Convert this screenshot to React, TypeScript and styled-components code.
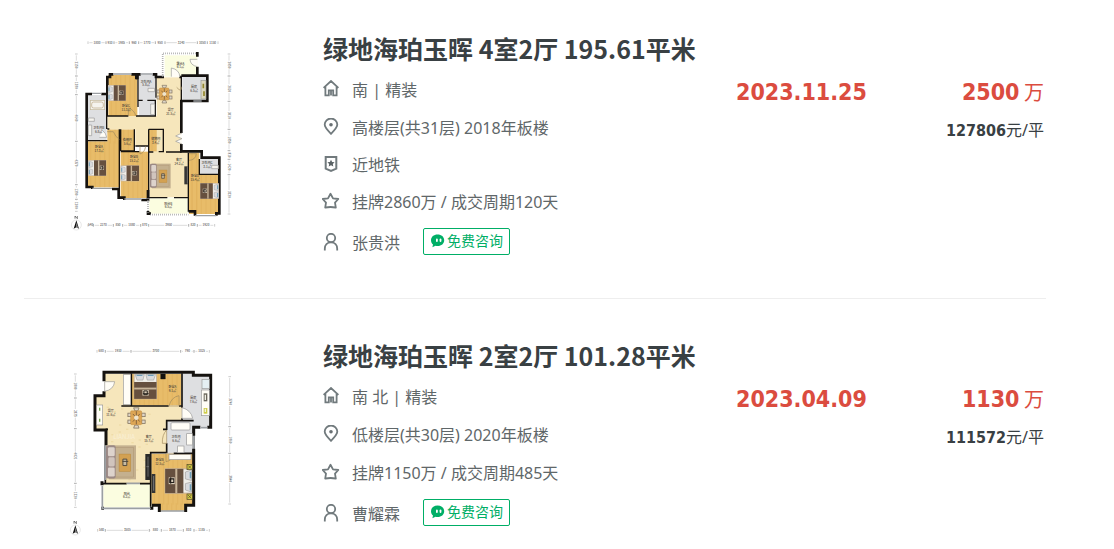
import React from "react";
import styled, { createGlobalStyle } from "styled-components";

const GlobalStyle = createGlobalStyle`
  body {
    margin: 0;
    background: #fff;
    color: #394043;
    font-family: "Noto Sans", "Noto Sans CJK SC", sans-serif;
    font-size: 16px;
  }
`;

const List = styled.main`
  padding: 0 68px 0 24px;
`;

const Card = styled.article`
  display: grid;
  grid-template-columns: 298px minmax(0, 1fr) 310px;
  padding: 29px 0 34px;
  border-bottom: 1px solid #eee;

  &:last-child {
    padding: 37px 0 0;
    border-bottom: 0;
  }
`;

const PlanLink = styled.a`
  display: block;
  padding: 1px 0 0 36px;

  svg {
    display: block;
  }
`;

const Title = styled.h2`
  margin: 0;
  padding-left: 1px;
  font-family: "Noto Sans CJK SC", sans-serif;
  font-size: 25px;
  line-height: 38px;
  font-weight: 700;
  white-space: nowrap;

  a {
    color: inherit;
    text-decoration: none;
  }
`;

const Line = styled.div<{ $height: number }>`
  display: flex;
  align-items: center;
  gap: 12px;
  height: ${(p) => p.$height}px;
  color: #5f6769;
  line-height: 24px;
  white-space: nowrap;

  svg {
    flex: none;
  }
`;

const LineText = styled.span`
  padding-top: 2px;
`;

const Details = styled.div`
  padding-top: 3px;
`;

const ChatButton = styled.button`
  display: flex;
  align-items: center;
  gap: 2px;
  height: 27px;
  margin: 0 0 2px 11px;
  padding: 0 6px;
  border: 1px solid #00ae66;
  border-radius: 2px;
  background: #fff;
  color: #00ae66;
  font-family: inherit;
  font-size: 14px;
  line-height: 24px;
  cursor: pointer;
`;

const Deal = styled.div`
  display: flex;
  justify-content: space-between;
  padding-top: 45px;
  white-space: nowrap;
`;

const Big = styled.div`
  color: #db4c3f;
  font-family: "DejaVu Sans Condensed", "DejaVu Sans", "Noto Sans CJK SC", sans-serif;
  font-size: 23px;
  line-height: 36px;
  font-weight: 700;
`;

const Unit = styled.span`
  font-family: "Noto Sans CJK SC", sans-serif;
  font-size: 20px;
  font-weight: 400;
`;

const Price = styled.div`
  padding-right: 2px;
  text-align: right;
`;

const UnitPrice = styled.div`
  line-height: 40px;

  strong {
    font-family: "DejaVu Sans Condensed", "DejaVu Sans", sans-serif;
  }
`;

const WOOD = "#e8bc69";
const CREAM = "#f6e6bb";
const TILE = "#dedfe1";
const BALCONY = "#fbfde0";
const WALL = "#15120f";

type Box = [number, number, number, number];

const Fill = ({ boxes, color }: { boxes: Box[]; color: string }) => (
  <g fill={color}>
    {boxes.map(([x1, y1, x2, y2], i) => (
      <rect key={i} x={x1} y={y1} width={x2 - x1} height={y2 - y1} />
    ))}
  </g>
);

const Grain = ({ boxes }: { boxes: Box[] }) => (
  <g stroke="#d39e49" strokeWidth="2" opacity=".35">
    {boxes.map(([x1, y1, x2, y2], i) => {
      const xs: number[] = [];
      for (let x = x1 + 9; x < x2; x += 14) xs.push(x);
      return xs.map((x) => <path key={`${i}-${x}`} d={`M${x} ${y1}V${y2}`} />);
    })}
  </g>
);

const Bed = ({ x, y, flip = false, w = 54, h = 48 }: { x: number; y: number; flip?: boolean; w?: number; h?: number }) => (
  <g transform={`translate(${flip ? x + w : x} ${y}) scale(${(flip ? -1 : 1) * (w / 54)} ${h / 48})`}>
    <rect width="54" height="48" fill="#c9b69d" />
    <rect y="2" width="18" height="44" fill="#f0eee9" />
    <path d="M1 3l12 4v13l-12 3zM1 26l12 3v12l-12 4z" fill="#d9dadd" stroke="#8f8d8b" />
    <path d="M3 7v12M3 30v12" stroke="#6f9fb9" strokeWidth="3" />
    <rect x="17" y="1" width="36" height="46" fill="#66503f" />
    <rect x="29" y="1" width="4" height="46" fill="#c8b59a" />
    <rect x="34" y="17" width="12" height="13" fill="#d9cdb9" />
    <path d="M36 20h8v7h-8zM42 17v12" stroke="#211c18" strokeWidth="2" fill="none" />
  </g>
);

const Lounge = ({ x, y, w, h }: { x: number; y: number; w: number; h: number }) => (
  <g transform={`translate(${x} ${y}) scale(${w / 62} ${h / 74})`}>
    <rect x="6" width="56" height="74" fill="#c4b08f" />
    <rect x="12" y="5" width="45" height="64" fill="none" stroke="#ab9270" />
    <rect width="20" height="72" rx="4" fill="#9b8985" />
    <rect x="4" y="4" width="14" height="20" rx="3" fill="#ddd3cc" />
    <rect x="5" y="26" width="13" height="20" rx="3" fill="#d0c4bd" />
    <rect x="4" y="48" width="14" height="20" rx="3" fill="#ddd3cc" />
    <rect x="27" y="19" width="24" height="38" fill="#d3a152" stroke="#b5883f" strokeWidth="1" />
    <path d="M35 30h8v14h-8zM34 35h12" fill="#c9bca2" stroke="#4a443c" strokeWidth="2" />
  </g>
);

const Dining = ({ x, y, s = 1 }: { x: number; y: number; s?: number }) => (
  <g transform={`translate(${x} ${y}) scale(${s})`}>
    <g fill="#ded6c8" stroke="#80725f" strokeWidth="2">
      <rect x="-22" y="-10" width="9" height="9" />
      <rect x="-22" y="8" width="9" height="9" />
      <rect x="14" y="-10" width="9" height="9" />
      <rect x="14" y="8" width="9" height="9" />
      <path d="M-7-24h14l-3 8h-8zM-7 29h14l-3-8h-8z" />
    </g>
    <rect x="-15" y="-16" width="29" height="36" rx="3" fill="#dda655" stroke="#b77d33" />
    <path d="M-9-8l18 20M9-8L-9 12M0-15v34" stroke="#6d5237" strokeWidth="2" />
    <circle cy="2" r="6" fill="#efe4cc" />
  </g>
);

const Label = ({ x, y, name, area }: { x: number; y: number; name: string; area: string }) => (
  <text x={x} y={y} textAnchor="middle" fontSize="9" fontWeight="500" fill="#4a443a">
    <tspan x={x}>{name}</tspan>
    <tspan x={x} dy="11">
      {area}
    </tspan>
  </text>
);

const Ruler = ({ at, stops, values, vertical = false }: { at: number; stops: number[]; values: string[]; vertical?: boolean }) => (
  <g stroke="#b8b8b8" strokeWidth="1.5" fill="none" transform={vertical ? `translate(${at} 0) rotate(90)` : `translate(0 ${at})`}>
    {stops.slice(1).map((end, i) => {
      const start = stops[i];
      const mid = (start + end) / 2;
      const wide = end - start > 34;
      return (
        <g key={i}>
          {wide && <path d={`M${start + 4} 0H${mid - 13}M${mid + 13} 0H${end - 4}`} />}
          <path d={`M${start} -4V4M${end} -4V4`} stroke="#999" />
          <text x={mid} y="3" textAnchor="middle" fontSize="9" fontWeight="500" fill="#555" stroke="none">
            {values[i]}
          </text>
        </g>
      );
    })}
  </g>
);

const Compass = ({ x, y }: { x: number; y: number }) => (
  <g transform={`translate(${x} ${y})`}>
    <circle r="15" fill="none" stroke="#ddd" strokeWidth="2" />
    <path d="M0-14L8 11L0 7L-8 11Z" fill="#111" />
    <path d="M0-8V7L5 9Z" fill="#aaa" />
    <path d="M-4-19v-8l7 8v-8" fill="none" stroke="#444" strokeWidth="2" />
  </g>
);

const wood1: Box[] = [
  [145, 135, 232, 258],
  [83, 334, 178, 472],
  [142, 298, 178, 340],
  [182, 298, 225, 363],
  [182, 365, 265, 504],
  [267, 298, 308, 365],
  [387, 368, 418, 550],
  [387, 434, 475, 552],
];

const PlanLarge = () => (
  <svg width="190" height="205" viewBox="0 0 570 615" fontFamily="Noto Sans CJK SC, sans-serif" role="img" aria-label="4室2厅户型图">
    <Ruler at={38} stops={[84, 138, 162, 208, 236, 286, 315, 412, 442, 474]} values={["1800", "910", "1985", "960", "1770", "950", "3240", "1050", "1150"]} />
    <Ruler at={49} vertical stops={[72, 138, 194, 334, 464, 508, 544]} values={["2150", "1790", "4640", "4370", "1290", "1200"]} />
    <Ruler at={507} vertical stops={[72, 138, 214, 298, 362, 388, 434, 552]} values={["2050", "2620", "3010", "1950", "810", "1420", "3720"]} />
    <Ruler at={586} stops={[84, 100, 160, 188, 242, 266, 386, 412, 464]} values={["540", "2270", "850", "1880", "870", "3950", "820", "1920"]} />
    <Fill color={WOOD} boxes={wood1} />
    <Grain boxes={wood1} />
    <Fill
      color={CREAM}
      boxes={[
        [142, 258, 365, 298],
        [290, 142, 365, 366],
        [226, 296, 265, 348],
        [268, 365, 385, 502],
      ]}
    />
    <Fill
      color={TILE}
      boxes={[
        [83, 195, 140, 332],
        [237, 135, 287, 258],
        [367, 140, 440, 212],
        [420, 387, 476, 432],
      ]}
    />
    <Fill
      color={BALCONY}
      boxes={[
        [314, 76, 412, 140],
        [268, 505, 383, 551],
      ]}
    />
    <g fill="none" stroke={WALL} strokeWidth="8" strokeLinejoin="miter">
      <path d="M96 192H80V471H97V477M156 477H176V503H193V510M244 510H264V480" />
      <path d="M124 192H142V141H150V133H160M214 133H229V148" />
      <path d="M232 148V133H242M278 133H288V141H312M358 141H365M364 137H442V213H364V309M364 342V364H425V383H478V550H469V557M405 557V544H386" />
      <path d="M273 551H264V543M412 66V80M412 110V140" />
    </g>
    <g fill="none" stroke={WALL} strokeWidth="4">
      <path d="M142 140V258M140 192V297M142 297H148M80 332H142M142 258H205M228 258H286V211H262M234 135V231M236 211H248M288 140V203M364 140V212M178 298V500M182 298V363M223 298V363H182M182 365H238M226 348H264M266 298V503M266 298H310V365H296M268 366H280M318 366H365M385 368V545M418 387V433H476M266 503H322M342 503H386" />
    </g>
    <g fill="none" stroke="#9b9fa3" strokeWidth="4">
      <path d="M160 132H214M242 132H278M96 190H124M97 475H156M193 507H244M405 557H469M400 213H425" />
    </g>
    <g fill="none" stroke="#9a9a9a" strokeWidth="5" strokeDasharray="2 4">
      <path d="M308 140V70H410M264 505V550M270 554H385" />
    </g>
    <g fill="#fffdf6" stroke="#999" strokeWidth="2">
      <path d="M334 140V114Q357 118 360 140M412 88H390Q391 106 412 110M366 309L347 318L366 326L347 334L366 342M118 322H140Q138 309 128 302" />
    </g>
    <g fill="none" stroke="#a08a5c" strokeWidth="2">
      <path d="M205 258V234Q222 239 228 258M240 349V372Q254 368 257 349M387 391Q407 390 409 371H387M141 305H160Q166 321 178 328M365 170Q366 190 350 172" />
    </g>
    <Bed x={144} y={165} />
    <Bed x={85} y={390} />
    <Bed x={182} y={406} w={56} />
    <Bed x={420} y={459} flip w={56} />
    <Lounge x={270} y={401} w={62} h={74} />
    <Dining x={313} y={190} />
    <rect x="373" y="409" width="10" height="54" fill="#343434" />
    <path d="M382 411V460" stroke="#777" strokeWidth="2" />
    <g fill="#f5f3ed" stroke="#999" strokeWidth="2">
      <rect x="91" y="211" width="43" height="28" stroke="#c4b799" />
      <rect x="95" y="216" width="35" height="18" rx="6" stroke="#b9a57e" />
      <path d="M85 264h18v10h-18zM85 285h10v32h-10zM264 175h20v10h-20zM272 222h12v32h-12zM455 406h20v10h-20z" />
      <rect x="423" y="151" width="15" height="56" fill="#dcd7bc" />
    </g>
    <path d="M430 161v14M432 184v14" stroke="#92852c" strokeWidth="5" />
    <g>
      <Label x={361} y={104} name="露台A" area="6.1㎡" />
      <Label x={258} y={158} name="卫生间A" area="5.8㎡" />
      <Label x={198} y={231} name="卧室C" area="11.3㎡" />
      <Label x={332} y={244} name="餐厅" area="21.5㎡" />
      <Label x={402} y={174} name="厨房" area="6.5㎡" />
      <Label x={116} y={297} name="卫生间B" area="6.8㎡" />
      <Label x={117} y={355} name="卧室A" area="17.3㎡" />
      <Label x={202} y={334} name="衣帽间" area="5.6㎡" />
      <Label x={287} y={331} name="储物间" area="3.4㎡" />
      <Label x={222} y={384} name="卧室B" area="15.2㎡" />
      <Label x={357} y={393} name="客厅" area="24.2㎡" />
      <Label x={441} y={402} name="卫生间C" area="3.1㎡" />
      <Label x={405} y={442} name="卧室D" area="15.4㎡" />
      <Label x={325} y={524} name="阳台B" area="6.5㎡" />
    </g>
    <Compass x={49} y={585} />
  </svg>
);

const wood2: Box[] = [
  [216, 102, 364, 196],
  [274, 342, 400, 494],
  [298, 490, 380, 512],
];

const PlanSmall = () => (
  <svg width="190" height="205" viewBox="0 -9 570 615" fontFamily="Noto Sans CJK SC, sans-serif" role="img" aria-label="2室2厅户型图">
    <Ruler at={34} stops={[111, 136, 213, 362, 402, 448]} values={["680", "1910", "3700", "790", "1025"]} />
    <Ruler at={46} vertical stops={[102, 174, 266, 430, 502]} values={["1800", "2375", "4021", "1720"]} />
    <Ruler at={509} vertical stops={[110, 260, 340, 492]} values={["3740", "1960", "3840"]} />
    <Ruler at={571} stops={[113, 136, 268, 304, 370, 402, 448]} values={["580", "3505", "880", "1870", "810", "1185"]} />
    <Fill
      color={CREAM}
      boxes={[
        [134, 102, 216, 198],
        [108, 166, 138, 268],
        [136, 196, 368, 242],
        [136, 240, 320, 340],
        [136, 338, 274, 430],
      ]}
    />
    <g fill="#ebd598" opacity=".55">
      {Array.from({ length: 32 }, (_, i) => (
        <rect key={i} x={140 + ((i * 37) % 126)} y={200 + ((i * 53) % 220)} width="7" height="4" />
      ))}
    </g>
    <Fill color={WOOD} boxes={wood2} />
    <Grain boxes={wood2} />
    <Fill
      color={TILE}
      boxes={[
        [368, 102, 450, 260],
        [320, 244, 400, 338],
      ]}
    />
    <Fill color={BALCONY} boxes={[[130, 432, 274, 502]]} />
    <g fill="none" stroke={WALL} strokeWidth="9">
      <path d="M132 124V97H400V106H452V262H442M421 262H401V287M132 154V167H105V270H138V316M401 326V496H377V516M298 516V496H276M126 424V436M124 505H132M270 505H280" />
      <path d="M302 102h14v15h-14z" fill={WALL} strokeWidth="1" />
    </g>
    <g fill="none" stroke={WALL} strokeWidth="5">
      <path d="M214 100V196M184 198H326M357 198H366M366 100V203M366 235V242M320 270V242H401M401 262V340M320 310V340M272 430V338H318M341 340H401M272 340V500M136 316V430M126 431H200M240 431H272M137 268H144M309 268H320" />
    </g>
    <g fill="none" stroke="#9b9fa3" strokeWidth="5">
      <path d="M136 316V420M127 438V505H272M200 430H240M303 513H372M421 263H442M401 287V326" />
    </g>
    <g fill="#fffdf6" stroke="#999" strokeWidth="2">
      <path d="M134 125H164Q161 149 134 154ZM366 203Q393 210 398 235H366Z" />
      <path d="M357 198V167Q334 171 327 198ZM318 340V365Q338 362 341 340ZM320 270Q306 284 307 310H320Z" fill="none" stroke="#a08a5c" />
      <rect x="190" y="104" width="22" height="90" />
      <rect x="110" y="195" width="18" height="60" />
      <rect x="327" y="344" width="66" height="15" />
      <rect x="333" y="248" width="57" height="22" rx="3" />
      <rect x="353" y="318" width="19" height="20" />
      <rect x="380" y="281" width="17" height="34" />
      <rect x="424" y="150" width="24" height="77" />
      <rect x="426" y="118" width="22" height="28" fill="#e5f0f4" />
    </g>
    <path d="M119 203v9M119 236v9" stroke="#75a851" strokeWidth="4" />
    <rect x="431" y="160" width="11" height="24" fill="#6b675c" />
    <rect x="431" y="204" width="11" height="17" fill="#cdcc47" />
    <path d="M436 164v16M436 206v10" stroke="#efefe5" strokeWidth="4" />
    <g transform="translate(291 102) rotate(90)">
      <Bed x={0} y={0} w={76} h={70} />
    </g>
    <Bed x={314} y={385} w={82} h={76} flip />
    <g fill="#d3cb46" stroke="#4e4524" strokeWidth="2">
      <rect x="381" y="373" width="16" height="16" />
      <rect x="381" y="462" width="16" height="16" />
      <path d="M384 376l10 10M394 376l-10 10M384 465l10 10M394 465l-10 10" />
    </g>
    <Lounge x={138} y={316} w={90} h={102} />
    <Dining x={229} y={231} s={1.15} />
    <rect x="256" y="342" width="15" height="78" fill="#292929" />
    <path d="M264 350v60M259 380h8" stroke="#888" strokeWidth="2" />
    <rect x="275" y="402" width="11" height="57" fill="#343434" />
    <path d="M281 408v44" stroke="#999" strokeWidth="2" />
    <text x="160" y="298" fontSize="18" fill="#fff" opacity=".4">
      LIANJIA
    </text>
    <g>
      <Label x={152} y={217} name="餐厅" area="11.6㎡" />
      <Label x={337} y={144} name="卧室A" area="9.1㎡" />
      <Label x={400} y={178} name="厨房" area="7.6㎡" />
      <Label x={266} y={294} name="客厅" area="15.7㎡" />
      <Label x={348} y={294} name="卫生间" area="6.6㎡" />
      <Label x={299} y={364} name="卧室B" area="12.5㎡" />
      <Label x={200} y={464} name="阳台" area="6.2㎡" />
    </g>
    <Compass x={46} y={570} />
  </svg>
);

const iconPaths = {
  home: <path d="M1.6 7.8L9 1L16.4 7.8M3.4 6.8V15.4H6.8V10.4H11.2V15.4H14.6V6.8M9 11V15.4" />,
  place: (
    <>
      <path d="M9 15.8C5.5 12.4 2.7 9.6 2.7 6.6a6.3 6.1 0 0 1 12.6 0C15.3 9.6 12.5 12.4 9 15.8Z" />
      <circle cx="9" cy="6.7" r="1.8" fill="#697073" stroke="none" />
    </>
  ),
  tag: (
    <>
      <path d="M3.7 1.9H14.3V13.6L9 15.8L3.7 13.6Z" strokeWidth="2" />
      <path d="M9 4.7L10.1 7L12.6 7.3L10.8 9L11.3 11.5L9 10.3L6.7 11.5L7.2 9L5.4 7.3L7.9 7Z" fill="#596164" stroke="none" />
    </>
  ),
  star: <path d="M8.5 1.8L11 6.4L16.3 7L13 10.6L13.8 15.6Q8.5 14.4 3.2 15.6L4 10.6L.7 7L6 6.4Z" strokeLinejoin="round" />,
  person: (
    <>
      <circle cx="9" cy="5" r="4.2" />
      <path d="M2.8 17.4V15.7C2.8 12 5.2 9.3 9 9.3S15.2 12 15.2 15.7V17.4" />
    </>
  ),
};

const Icon = ({ name }: { name: keyof typeof iconPaths }) => (
  <svg width="18" height="18" viewBox="0 0 18 18" fill="none" stroke="#717a7d" strokeWidth="1.8" aria-hidden="true">
    {iconPaths[name]}
  </svg>
);

const ChatIcon = () => (
  <svg width="15" height="14" viewBox="0 0 15 14" aria-hidden="true">
    <path d="M7.6.6C3.7.6 1 3 1 6.3c0 1.8.8 3.3 2 4.3L2.4 13.2L5.5 11.8c.7.2 1.4.3 2.1.3 3.8 0 6.6-2.5 6.6-5.8S11.4.6 7.6.6Z" fill="#00ae66" />
    <rect x="6" y="4.5" width="1.8" height="3.4" rx=".9" fill="#fff" />
    <rect x="9.6" y="4.5" width="1.8" height="3.4" rx=".9" fill="#fff" />
  </svg>
);

interface Listing {
  title: string;
  plan: React.ReactNode;
  facing: string;
  floor: string;
  tag?: string;
  cycle: string;
  agent: string;
  date: string;
  total: string;
  unit: string;
}

const listings: Listing[] = [
  {
    title: "绿地海珀玉晖 4室2厅 195.61平米",
    plan: <PlanLarge />,
    facing: "南 | 精装",
    floor: "高楼层(共31层) 2018年板楼",
    tag: "近地铁",
    cycle: "挂牌2860万 / 成交周期120天",
    agent: "张贵洪",
    date: "2023.11.25",
    total: "2500",
    unit: "127806",
  },
  {
    title: "绿地海珀玉晖 2室2厅 101.28平米",
    plan: <PlanSmall />,
    facing: "南 北 | 精装",
    floor: "低楼层(共30层) 2020年板楼",
    cycle: "挂牌1150万 / 成交周期485天",
    agent: "曹耀霖",
    date: "2023.04.09",
    total: "1130",
    unit: "111572",
  },
];

export default function App() {
  return (
    <>
      <GlobalStyle />
      <List>
        {listings.map((item) => (
          <Card key={item.title}>
            <PlanLink href="#">{item.plan}</PlanLink>
            <div>
              <Title>
                <a href="#">{item.title}</a>
              </Title>
              <Details>
                <Line $height={38}>
                  <Icon name="home" />
                  <LineText>{item.facing}</LineText>
                </Line>
                <Line $height={38}>
                  <Icon name="place" />
                  <LineText>{item.floor}</LineText>
                </Line>
                {item.tag && (
                  <Line $height={36}>
                    <Icon name="tag" />
                    <LineText>{item.tag}</LineText>
                  </Line>
                )}
                <Line $height={38}>
                  <Icon name="star" />
                  <LineText>{item.cycle}</LineText>
                </Line>
                <Line $height={44}>
                  <Icon name="person" />
                  <LineText>{item.agent}</LineText>
                  <ChatButton type="button">
                    <ChatIcon />
                    免费咨询
                  </ChatButton>
                </Line>
              </Details>
            </div>
            <Deal>
              <Big>{item.date}</Big>
              <Price>
                <Big>
                  {item.total}
                  <Unit> 万</Unit>
                </Big>
                <UnitPrice>
                  <strong>{item.unit}</strong>元/平
                </UnitPrice>
              </Price>
            </Deal>
          </Card>
        ))}
      </List>
    </>
  );
}
